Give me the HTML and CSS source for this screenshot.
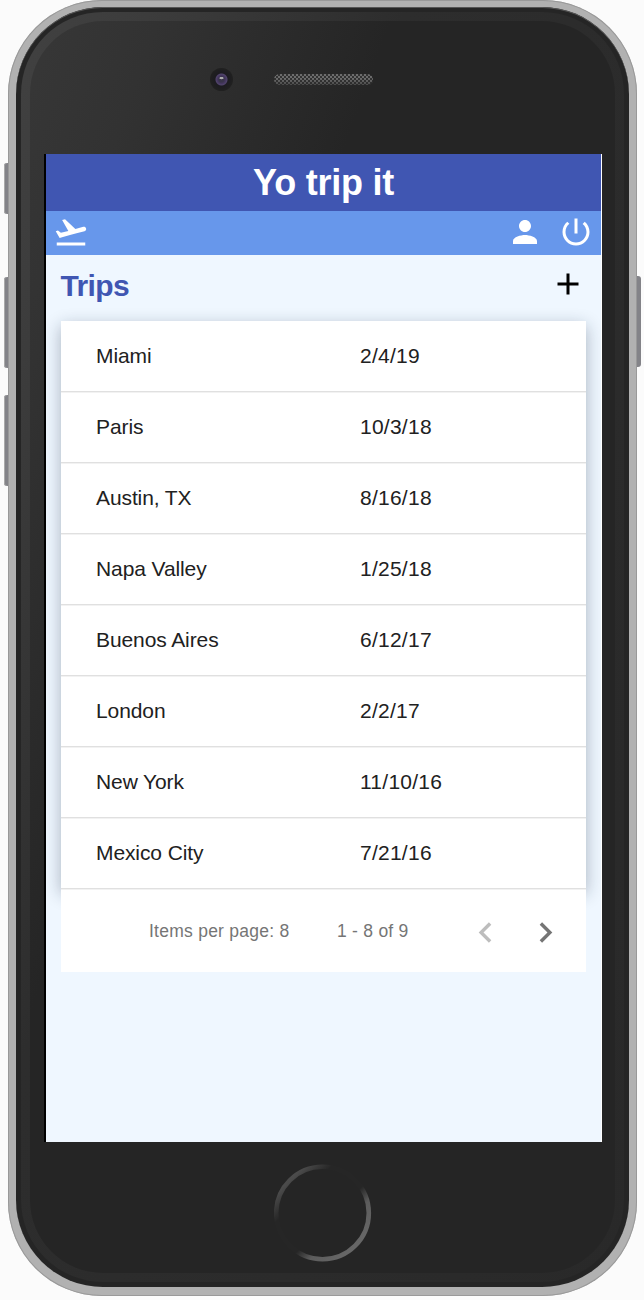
FILE: index.html
```html
<!DOCTYPE html>
<html lang="en">
<head>
<meta charset="utf-8">
<title>Yo trip it</title>
<link rel="stylesheet" href="styles.css">
</head>
<body>
<div class="phone">
  <span class="side-button mute"></span>
  <span class="side-button volume-up"></span>
  <span class="side-button volume-down"></span>
  <span class="side-button power"></span>
  <div class="bezel">
    <div class="face">
      <div class="top">
        <span class="camera"></span>
        <span class="speaker"></span>
      </div>
      <div class="screen">
        <header class="title"><span>Yo trip it</span></header>
        <nav class="toolbar">
          <svg class="icon" viewBox="0 0 24 24"><path d="M2.5 19h19v2h-19zm19.57-9.36c-.21-.8-1.04-1.28-1.84-1.06L14.92 10l-6.9-6.43-1.93.51 4.14 7.17-4.97 1.33-1.97-1.54-1.45.39 1.82 3.16.77 1.33 1.6-.43 5.31-1.42 4.35-1.16L21 11.49c.81-.23 1.28-1.05 1.07-1.85z"/></svg>
          <svg class="icon account" viewBox="0 0 24 24"><path d="M12 12c2.21 0 4-1.79 4-4s-1.79-4-4-4-4 1.79-4 4 1.79 4 4 4zm0 2c-2.67 0-8 1.34-8 4v2h16v-2c0-2.66-5.33-4-8-4z"/></svg>
          <svg class="icon" viewBox="0 0 24 24"><path d="M13 3h-2v10h2V3zm4.83 2.17l-1.42 1.42C17.99 7.86 19 9.81 19 12c0 3.87-3.13 7-7 7s-7-3.13-7-7c0-2.19 1.01-4.14 2.58-5.42L6.17 5.17C4.23 6.82 3 9.26 3 12c0 4.97 4.03 9 9 9s9-4.03 9-9c0-2.74-1.23-5.18-3.17-6.83z"/></svg>
        </nav>
        <main class="content">
          <div class="heading">
            <h1>Trips</h1>
            <svg class="icon" viewBox="0 0 24 24"><path d="M19 13h-6v6h-2v-6H5v-2h6V5h2v6h6v2z"/></svg>
          </div>
          <div class="trips">
            <div class="row"><span>Miami</span><span class="date">2/4/19</span></div>
            <div class="row"><span>Paris</span><span class="date">10/3/18</span></div>
            <div class="row"><span>Austin, TX</span><span class="date">8/16/18</span></div>
            <div class="row"><span>Napa Valley</span><span class="date">1/25/18</span></div>
            <div class="row"><span>Buenos Aires</span><span class="date">6/12/17</span></div>
            <div class="row"><span>London</span><span class="date">2/2/17</span></div>
            <div class="row"><span>New York</span><span class="date">11/10/16</span></div>
            <div class="row"><span>Mexico City</span><span class="date">7/21/16</span></div>
          </div>
          <div class="paginator">
            <span class="per-page">Items per page: 8</span>
            <span class="range">1 - 8 of 9</span>
            <svg class="chevron disabled" viewBox="0 0 24 24"><path d="M15.41 7.41L14 6l-6 6 6 6 1.41-1.41L10.83 12z"/></svg>
            <svg class="chevron" viewBox="0 0 24 24"><path d="M10 6L8.59 7.41 13.17 12l-4.58 4.59L10 18l6-6z"/></svg>
          </div>
        </main>
      </div>
      <svg class="home" viewBox="0 0 98 98">
        <defs>
          <linearGradient id="ring" x1="0.15" y1="0.15" x2="0.85" y2="0.85">
            <stop offset="0" stop-color="#4b4b4b"/>
            <stop offset="0.21" stop-color="#262626"/>
            <stop offset="0.6" stop-color="#262626"/>
            <stop offset="0.76" stop-color="#5c5c5c"/>
            <stop offset="1" stop-color="#666"/>
          </linearGradient>
        </defs>
        <circle cx="48.5" cy="49" r="46.3" fill="none" stroke="url(#ring)" stroke-width="4.6"/>
      </svg>
    </div>
  </div>
</div>
</body>
</html>
```
FILE: styles.css
```css
* { box-sizing: border-box; }

body {
  margin: 0;
  height: 1300px;
  overflow: hidden;
  background: #fbfbfb;
  font-family: "Liberation Sans", Arial, sans-serif;
}

.phone {
  position: relative;
  width: 629px;
  height: 1296px;
  margin-left: 8px;
  padding: 7px 8px 9px;
  border-radius: 94px;
  background: #b1b1b1;
  box-shadow: inset 0 0 0 1px #999;
}

.side-button {
  position: absolute;
  z-index: -1;
  left: -4px;
  width: 6px;
  border-radius: 3px 0 0 3px;
  background: #838388;
  box-shadow: inset 1px 0 #aaa;
}
.mute { top: 163px; height: 51px; }
.volume-up { top: 277px; height: 91px; }
.volume-down { top: 395px; height: 91px; }
.power {
  top: 276px;
  left: auto;
  right: -4px;
  height: 91px;
  border-radius: 0 3px 3px 0;
  box-shadow: none;
}

.bezel {
  height: 1280px;
  padding: 5px;
  border-radius: 87px;
  background: #252525;
  box-shadow: inset 0 1px #555;
}

.face {
  display: flex;
  flex-direction: column;
  height: 1270px;
  padding: 0 14px;
  border: 9px solid transparent;
  border-radius: 82px;
  background:
    linear-gradient(110deg, #373737 0, #323232 120px, #252525 340px) padding-box,
    linear-gradient(110deg, #414141 0, #3c3c3c 120px, #2d2d2d 360px, #292929) border-box;
}

.top {
  display: flex;
  flex: none;
  align-items: center;
  height: 133px;
  padding: 0 0 17px 166px;
}
.camera {
  width: 23px;
  height: 23px;
  border-radius: 50%;
  background:
    radial-gradient(ellipse 2.5px 1.5px at 50% 44%, #aaa 0 60%, transparent),
    radial-gradient(circle at 50% 50%, #39344a 0 2.5px, #44365f 4px, #51446b 5.5px, #1c1b20 6.5px, #202020 11px);
}
.speaker {
  width: 99px;
  height: 11px;
  margin-left: 40.5px;
  border-radius: 6px;
  background:
    linear-gradient(rgba(37, 37, 37, 0.1) 40%, rgba(37, 37, 37, 0.55)),
    repeating-conic-gradient(#747474 0 25%, #343434 0 50%) 0 0 / 4px 4px;
}

.screen {
  flex: none;
  width: 558px;
  height: 988px;
  border-left: 2px solid #000;
  border-right: 1px solid #fff;
  background: #eff7ff;
}

.title {
  display: flex;
  align-items: center;
  justify-content: center;
  height: 57px;
  background: #4056b2;
  color: #fff;
  font-size: 36px;
  font-weight: 700;
  letter-spacing: -0.25px;
}

.toolbar {
  display: flex;
  align-items: center;
  height: 43.5px;
  padding: 0 7.5px 1.5px 6.7px;
  background: #6797eb;
  color: #fff;
}
.account { margin: 0 14.5px 0 auto; }

.icon {
  flex: none;
  width: 36px;
  height: 36px;
  fill: currentColor;
}

.content {
  height: 887.5px;
  padding: 0 15px 0 14.5px;
  overflow: hidden;
}
.heading {
  display: flex;
  align-items: center;
  justify-content: space-between;
  height: 66.5px;
  padding: 0 0 7px;
}
h1 {
  margin: 3px 0 0;
  color: #4056b2;
  font-size: 30px;
  letter-spacing: -0.65px;
}

.trips {
  background: #fff;
  box-shadow: 0 5px 16px rgba(20, 35, 55, 0.32);
}
.row {
  display: grid;
  grid-template-columns: 264px 1fr;
  align-items: center;
  height: 71px;
  padding-left: 35.5px;
  border-bottom: 1px solid #e0e0e0;
  box-shadow: 0 1px #f2f2f2;
  color: #212121;
  font-size: 21px;
  letter-spacing: -0.1px;
}
.date { letter-spacing: 0.25px; }

.paginator {
  display: flex;
  align-items: center;
  height: 83px;
  padding-left: 88.5px;
  border-top: 1px solid #f2f2f2;
  background: #fff;
  color: #757575;
  font-size: 17.5px;
  letter-spacing: 0.25px;
}
.per-page { width: 188px; }
.range { width: 128px; }
.chevron {
  flex: none;
  width: 41px;
  height: 41px;
  margin: 2px 18.5px 0 0;
  fill: #757575;
}
.disabled { fill: #bdbdbd; }

.home {
  flex: none;
  align-self: center;
  width: 98px;
  height: 98px;
  margin-top: 22px;
}
```
